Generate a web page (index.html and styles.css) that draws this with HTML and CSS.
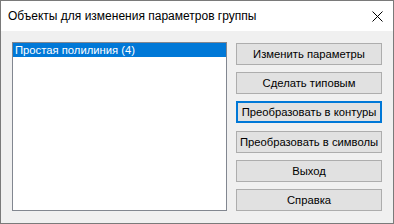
FILE: index.html
```html
<!DOCTYPE html>
<html lang="ru">
<head>
<meta charset="utf-8">
<link rel="stylesheet" href="styles.css">
</head>
<body>
<div class="window">
  <div class="titlebar">
    <span class="title">Объекты для изменения параметров группы</span>
    <div class="close">
      <svg width="11" height="11" viewBox="0 0 11 11"><path d="M0.5 0.5 L10.5 10.5 M10.5 0.5 L0.5 10.5" stroke="#000" stroke-width="1" fill="none"/></svg>
    </div>
  </div>
  <div class="client">
    <div class="listbox">
      <div class="item selected">Простая полилиния (4)</div>
    </div>
    <div class="buttons">
      <div class="btn">Изменить параметры</div>
      <div class="btn">Сделать типовым</div>
      <div class="btn focused">Преобразовать в контуры</div>
      <div class="btn">Преобразовать в символы</div>
      <div class="btn">Выход</div>
      <div class="btn">Справка</div>
    </div>
  </div>
</div>
</body>
</html>
```
FILE: styles.css
```css
html, body {
  margin: 0;
  padding: 0;
  background: #fff;
}
.window {
  width: 394px;
  height: 224px;
  box-sizing: border-box;
  border: 1px solid #7a7a7a;
  display: flex;
  flex-direction: column;
  font-family: "Liberation Sans", Arial, sans-serif;
  font-size: 11.25px;
  color: #000;
}
.titlebar {
  height: 30px;
  background: #fff;
  display: flex;
  align-items: center;
  justify-content: space-between;
  padding-left: 7px;
}
.title {
  font-size: 12px;
  margin-top: -1px;
}
.close {
  width: 30px;
  height: 30px;
  display: flex;
  align-items: center;
  justify-content: center;
  margin-right: 1px;
}
.client {
  flex: 1;
  background: #f0f0f0;
  display: flex;
  padding: 11px 0 0 11px;
  gap: 9px;
}
.listbox {
  width: 215px;
  height: 169px;
  box-sizing: border-box;
  border: 1px solid #828790;
  background: #fff;
}
.item {
  height: 14px;
  line-height: 14px;
  padding-left: 2px;
  white-space: nowrap;
}
.item.selected {
  background: #0078d7;
  color: #fff;
}
.buttons {
  width: 146px;
  height: 168px;
  margin-top: 1px;
  display: flex;
  flex-direction: column;
  justify-content: space-between;
}
.btn {
  height: 22px;
  box-sizing: border-box;
  border: 1px solid #adadad;
  background: #e1e1e1;
  display: flex;
  align-items: center;
  justify-content: center;
  white-space: nowrap;
}
.btn.focused {
  border: 2px solid #0078d7;
}
```
